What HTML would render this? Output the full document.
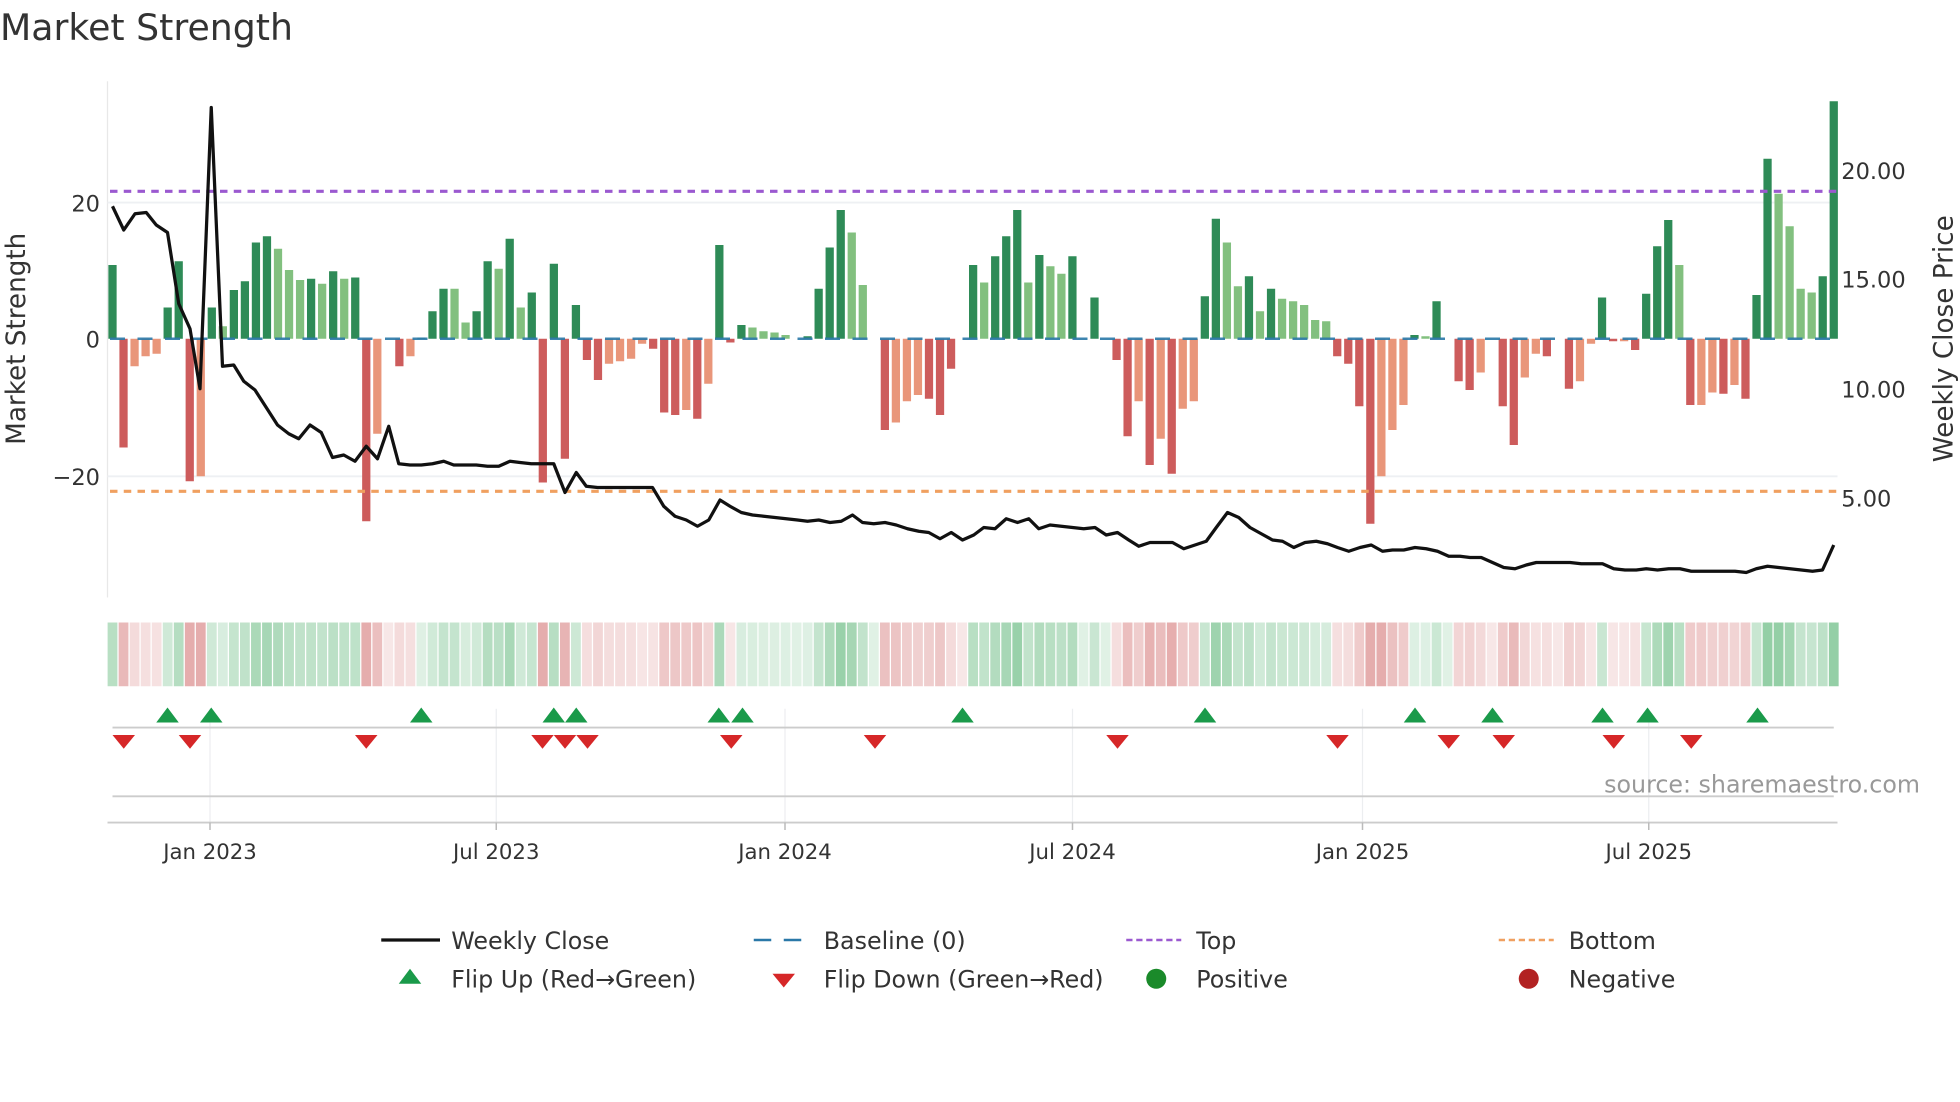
<!DOCTYPE html>
<html><head><meta charset="utf-8"><style>
html,body{margin:0;padding:0;background:#fff;width:1960px;height:1102px;overflow:hidden}
svg{display:block}
text{font-family:"DejaVu Sans","Liberation Sans",sans-serif;fill:#333}
</style></head><body>
<svg id="s" width="1960" height="1102" viewBox="0 0 1568 881.6" xmlns="http://www.w3.org/2000/svg">
<text x="0" y="32" font-size="29">Market Strength</text>
<line x1="86" y1="65" x2="86" y2="478" stroke="#e8e8e8" stroke-width="1"/>
<line x1="86" y1="162" x2="1470" y2="162" stroke="#eef0f3" stroke-width="1.5"/>
<line x1="86" y1="381" x2="1470" y2="381" stroke="#eef0f3" stroke-width="1.5"/>
<g id="bars"></g>
<line x1="88" y1="271" x2="1470" y2="271" stroke="#2a78a8" stroke-width="2" stroke-dasharray="12 10" opacity="0.9"/>
<line x1="88" y1="153" x2="1470" y2="153" stroke="#9b59d0" stroke-width="2.5" stroke-dasharray="6 5"/>
<line x1="88" y1="393" x2="1470" y2="393" stroke="#f0a060" stroke-width="2.5" stroke-dasharray="6 5"/>
<polyline id="price" fill="none" stroke="#111" stroke-width="2.6" stroke-linejoin="round"/>
<g font-size="18">
<text x="80" y="169" text-anchor="end">20</text>
<text x="80" y="278" text-anchor="end">0</text>
<text x="80" y="388" text-anchor="end">−20</text>
<text x="1473" y="143">20.00</text>
<text x="1473" y="230">15.00</text>
<text x="1473" y="318">10.00</text>
<text x="1473" y="405">5.00</text>
</g>
<text transform="translate(20,271) rotate(-90)" text-anchor="middle" font-size="21">Market Strength</text>
<text transform="translate(1562,271) rotate(-90)" text-anchor="middle" font-size="21">Weekly Close Price</text>
<g id="heat"></g>
<g stroke="#eceef0" stroke-width="1">
<line x1="168" y1="567" x2="168" y2="658"/><line x1="397" y1="567" x2="397" y2="658"/><line x1="628" y1="567" x2="628" y2="658"/><line x1="858" y1="567" x2="858" y2="658"/><line x1="1090" y1="567" x2="1090" y2="658"/><line x1="1319" y1="567" x2="1319" y2="658"/>
</g>
<line x1="90" y1="582" x2="1467" y2="582" stroke="#ccc" stroke-width="1.5"/>
<line x1="90" y1="637" x2="1467" y2="637" stroke="#ccc" stroke-width="1.5"/>
<line x1="86" y1="658" x2="1470" y2="658" stroke="#ccc" stroke-width="1.5"/>
<g stroke="#bbb" stroke-width="1.2">
<line x1="168" y1="658" x2="168" y2="664"/><line x1="397" y1="658" x2="397" y2="664"/><line x1="628" y1="658" x2="628" y2="664"/><line x1="858" y1="658" x2="858" y2="664"/><line x1="1090" y1="658" x2="1090" y2="664"/><line x1="1319" y1="658" x2="1319" y2="664"/>
</g>
<g id="marks"></g>
<text x="1536" y="634" text-anchor="end" font-size="19" style="fill:#999">source: sharemaestro.com</text>
<g font-size="17" text-anchor="middle">
<text x="168" y="687">Jan 2023</text><text x="397" y="687">Jul 2023</text><text x="628" y="687">Jan 2024</text><text x="858" y="687">Jul 2024</text><text x="1090" y="687">Jan 2025</text><text x="1319" y="687">Jul 2025</text>
</g>
<g font-size="19">
<line x1="305" y1="752" x2="352" y2="752" stroke="#111" stroke-width="2.6"/><text x="361" y="759">Weekly Close</text>
<line x1="603" y1="752" x2="647" y2="752" stroke="#2a78a8" stroke-width="2" stroke-dasharray="14 10"/><text x="659" y="759">Baseline (0)</text>
<line x1="901" y1="752" x2="945" y2="752" stroke="#9b59d0" stroke-width="2" stroke-dasharray="5 3"/><text x="957" y="759">Top</text>
<line x1="1199" y1="752" x2="1243" y2="752" stroke="#f0a060" stroke-width="2" stroke-dasharray="5 3"/><text x="1255" y="759">Bottom</text>
<polygon points="319,787 337,787 328,775" fill="#1a9a4a"/><text x="361" y="790">Flip Up (Red→Green)</text>
<polygon points="618,779 636,779 627,790" fill="#d62728"/><text x="659" y="790">Flip Down (Green→Red)</text>
<circle cx="925" cy="783" r="8" fill="#1a8a2a"/><text x="957" y="790">Positive</text>
<circle cx="1223" cy="783" r="8" fill="#b22222"/><text x="1255" y="790">Negative</text>
</g>
</svg>
<script>
var B="59G -87R -22O -14O -12O 25G 62G -114R -110O 25G 10L 39G 46G 77G 82G 72L 55L 47L 48G 44L 54G 48L 49G -146R -76O 0Z -22R -14O 1G 22G 40G 40L 13L 22G 62G 56L 80G 25L 37G -115R 60G -96R 27G -17R -33R -20O -18O -16O -4O -8R -59R -61R -57O -64R -36O 75G -3R 11G 9L 6L 5L 3L 0Z 2G 40G 73G 103G 85L 43L 0Z -73R -67O -50O -45O -48R -61R -24R 0Z 59G 45L 66G 82G 103G 45L 67G 58L 52L 66G 0Z 33G 0Z -17R -78R -50O -101R -80O -108R -56O -50O 34G 96G 77L 42L 50G 22L 40G 32L 30L 27L 15L 14L -14R -20R -54R -148R -110O -73O -53O 3G 2L 30G 0Z -34R -41R -27O 0Z -54R -85R -31O -12O -14R 0Z -40R -34O -4O 33G -2R -2O -9R 36G 74G 95G 59L -53R -53O -43O -44R -37O -48R 35G 144G 116L 90L 40L 37L 50G 190G".split(" ");
var C={G:"#2e8b57",L:"#82c07f",R:"#cd5c5c",O:"#e9967a",Z:"#2e8b57"};
var NS="http://www.w3.org/2000/svg";
function el(t,a,p){var e=document.createElementNS(NS,t);for(var k in a)e.setAttribute(k,a[k]);p.appendChild(e);return e;}
var bars=document.getElementById("bars"),heat=document.getElementById("heat");
var step=(1467-90)/156,prev=1;
B.forEach(function(s,i){var h=parseFloat(s),c=s.slice(-1),x=90+i*step;
 if(h!==0){el("rect",{x:x-3.3,y:h>0?271-h:271,width:6.6,height:Math.abs(h),fill:C[c]},bars);}
 var sg=h>0?1:(h<0?-1:prev);prev=sg;
 var t=Math.min(1,Math.abs(h)/110);var a=0.25+0.6*t;
 var col=sg>0?"rgba(46,160,80,"+(a*0.6)+")":"rgba(200,80,80,"+(a*0.55)+")";
 el("rect",{x:x-step/2+0.5,y:498,width:step-1,height:51,fill:col},heat);
});
var P="90,165 99,184 108,171 117,170 125,180 134,186 143,243 152,263 160,311 169,86 178,293 187,292 195,305 204,312 213,326 222,340 231,347 239,351 248,340 257,346 266,366 275,364 284,369 293,357 302,367 311,341 319,371 328,372 337,372 346,371 355,369 363,372 372,372 381,372 390,373 399,373 408,369 416,370 425,371 434,371 443,371 452,394 461,378 469,389 478,390 487,390 496,390 505,390 514,390 522,390 531,405 540,413 549,416 558,421 567,416 576,400 584,405 593,410 602,412 611,413 620,414 629,415 638,416 646,417 655,416 664,418 673,417 682,412 690,418 699,419 708,418 717,420 726,423 735,425 743,426 752,431 761,426 770,432 779,428 787,422 796,423 805,415 814,418 823,415 831,423 840,420 849,421 858,422 867,423 876,422 885,428 894,426 903,432 911,437 920,434 929,434 938,434 947,439 956,436 965,433 973,422 982,410 991,414 1000,422 1009,427 1018,432 1026,433 1035,438 1044,434 1053,433 1062,435 1070,438 1079,441 1088,438 1097,436 1106,441 1114,440 1123,440 1132,438 1141,439 1150,441 1159,445 1168,445 1176,446 1185,446 1194,450 1203,454 1212,455 1221,452 1229,450 1238,450 1247,450 1256,450 1265,451 1273,451 1282,451 1291,455 1300,456 1309,456 1317,455 1326,456 1335,455 1344,455 1353,457 1361,457 1370,457 1379,457 1388,457 1397,458 1405,455 1414,453 1423,454 1432,455 1441,456 1450,457 1458,456 1467,436";
document.getElementById("price").setAttribute("points",P);
var marks=document.getElementById("marks");
[134,169,337,443,461,575,594,770,964,1132,1194,1282,1318,1406].forEach(function(x){el("polygon",{points:(x-9)+",578 "+(x+9)+",578 "+x+",566",fill:"#1a9a4a"},marks);});
[99,152,293,434,452,470,585,700,894,1070,1159,1203,1291,1353].forEach(function(x){el("polygon",{points:(x-9)+",588 "+(x+9)+",588 "+x+",599",fill:"#d62728"},marks);});
</script>
</body></html>
